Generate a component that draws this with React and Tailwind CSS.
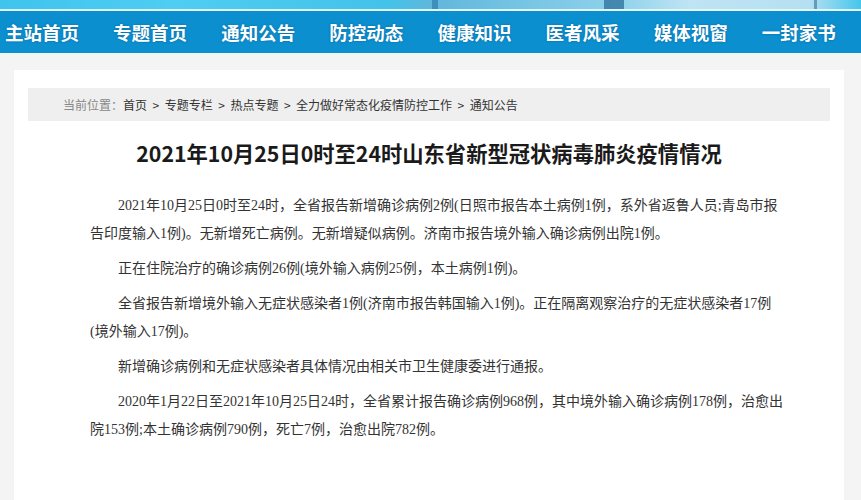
const NAV = ['主站首页', '专题首页', '通知公告', '防控动态', '健康知识', '医者风采', '媒体视窗', '一封家书']

const CRUMBS = ['首页', '专题专栏', '热点专题', '全力做好常态化疫情防控工作', '通知公告']

// each paragraph is kept as its printed lines so the wraps match the page
const PARAS = [
  [
    '2021年10月25日0时至24时，全省报告新增确诊病例2例(日照市报告本土病例1例，系外省返鲁人员;青岛市报',
    '告印度输入1例)。无新增死亡病例。无新增疑似病例。济南市报告境外输入确诊病例出院1例。',
  ],
  ['正在住院治疗的确诊病例26例(境外输入病例25例，本土病例1例)。'],
  [
    '全省报告新增境外输入无症状感染者1例(济南市报告韩国输入1例)。正在隔离观察治疗的无症状感染者17例',
    '(境外输入17例)。',
  ],
  ['新增确诊病例和无症状感染者具体情况由相关市卫生健康委进行通报。'],
  [
    '2020年1月22日至2021年10月25日24时，全省累计报告确诊病例968例，其中境外输入确诊病例178例，治愈出',
    '院153例;本土确诊病例790例，死亡7例，治愈出院782例。',
  ],
]

const SANS = { fontFamily: '"Noto Sans CJK SC", "Noto Sans", sans-serif' }
const BODY = { fontFamily: '"Liberation Serif", "Noto Sans CJK SC", serif' }

function Banner() {
  return (
    <svg width="100%" height="9" viewBox="0 0 861 9" preserveAspectRatio="none" className="block">
      <defs>
        <linearGradient id="bn" x1="0" x2="1" y1="0" y2="0">
          <stop offset="0" stopColor="#3ec4ee" />
          <stop offset="0.2" stopColor="#4fcdf2" />
          <stop offset="0.45" stopColor="#43c3ea" />
          <stop offset="0.5" stopColor="#5fb7dc" />
          <stop offset="0.72" stopColor="#8fd2ec" />
          <stop offset="0.8" stopColor="#bfe4f3" />
          <stop offset="0.94" stopColor="#b5e0f1" />
          <stop offset="1" stopColor="#46c6ec" />
        </linearGradient>
      </defs>
      <rect width="861" height="9" fill="url(#bn)" />
      <rect x="432" width="6" height="9" fill="#2f7fae" opacity="0.7" />
      <rect x="604" width="20" height="9" fill="#2b6f9c" opacity="0.75" />
      <rect x="814" width="3" height="9" fill="#3a6f8e" opacity="0.6" />
    </svg>
  )
}

export default function App() {
  return (
    <div className="w-[861px] h-[500px] overflow-hidden bg-[#f4f4f4]">
      <Banner />
      <div className="h-[2px] bg-[#e4f6fc]" />
      <nav className="h-[42px] bg-[#0b8fcf] flex items-center pl-[5px] gap-[34.1px]" style={SANS}>
        {NAV.map((n) => (
          <span
            key={n}
            className="text-white font-bold text-[18.5px] leading-none whitespace-nowrap"
            style={{ textShadow: '0 0 2px rgba(0,60,110,0.5)' }}
          >
            {n}
          </span>
        ))}
      </nav>

      <div className="pt-[17px] pl-[14px] pr-[17px]">
        <div className="bg-white h-[460px] pt-[18px] px-[14px]">
          <div className="h-[33px] bg-[#efefef] flex items-center pl-[35px] text-[12px] text-[#333]" style={SANS}>
            <span className="text-[#888]">当前位置：</span>
            {CRUMBS.map((c, i) => (
              <span key={c} className="whitespace-nowrap">
                {i > 0 && <span className="px-[5.5px]">&gt;</span>}
                {c}
              </span>
            ))}
          </div>

          <h1
            className="mt-[16px] text-center font-bold text-[21.3px] leading-[32px] text-[#1a1a1a]"
            style={SANS}
          >
            2021年10月25日0时至24时山东省新型冠状病毒肺炎疫情情况
          </h1>

          <div className="mt-[23px] ml-[62px] w-[720px] text-[14px] leading-[28px] text-[#333]" style={BODY}>
            {PARAS.map((lines, i) => (
              <p key={i} className={`indent-[28px] whitespace-nowrap ${i > 0 ? 'mt-[7px]' : ''}`}>
                {lines.map((l, j) => (
                  <span key={j}>
                    {j > 0 && <br />}
                    {l}
                  </span>
                ))}
              </p>
            ))}
          </div>
        </div>
      </div>
    </div>
  )
}
